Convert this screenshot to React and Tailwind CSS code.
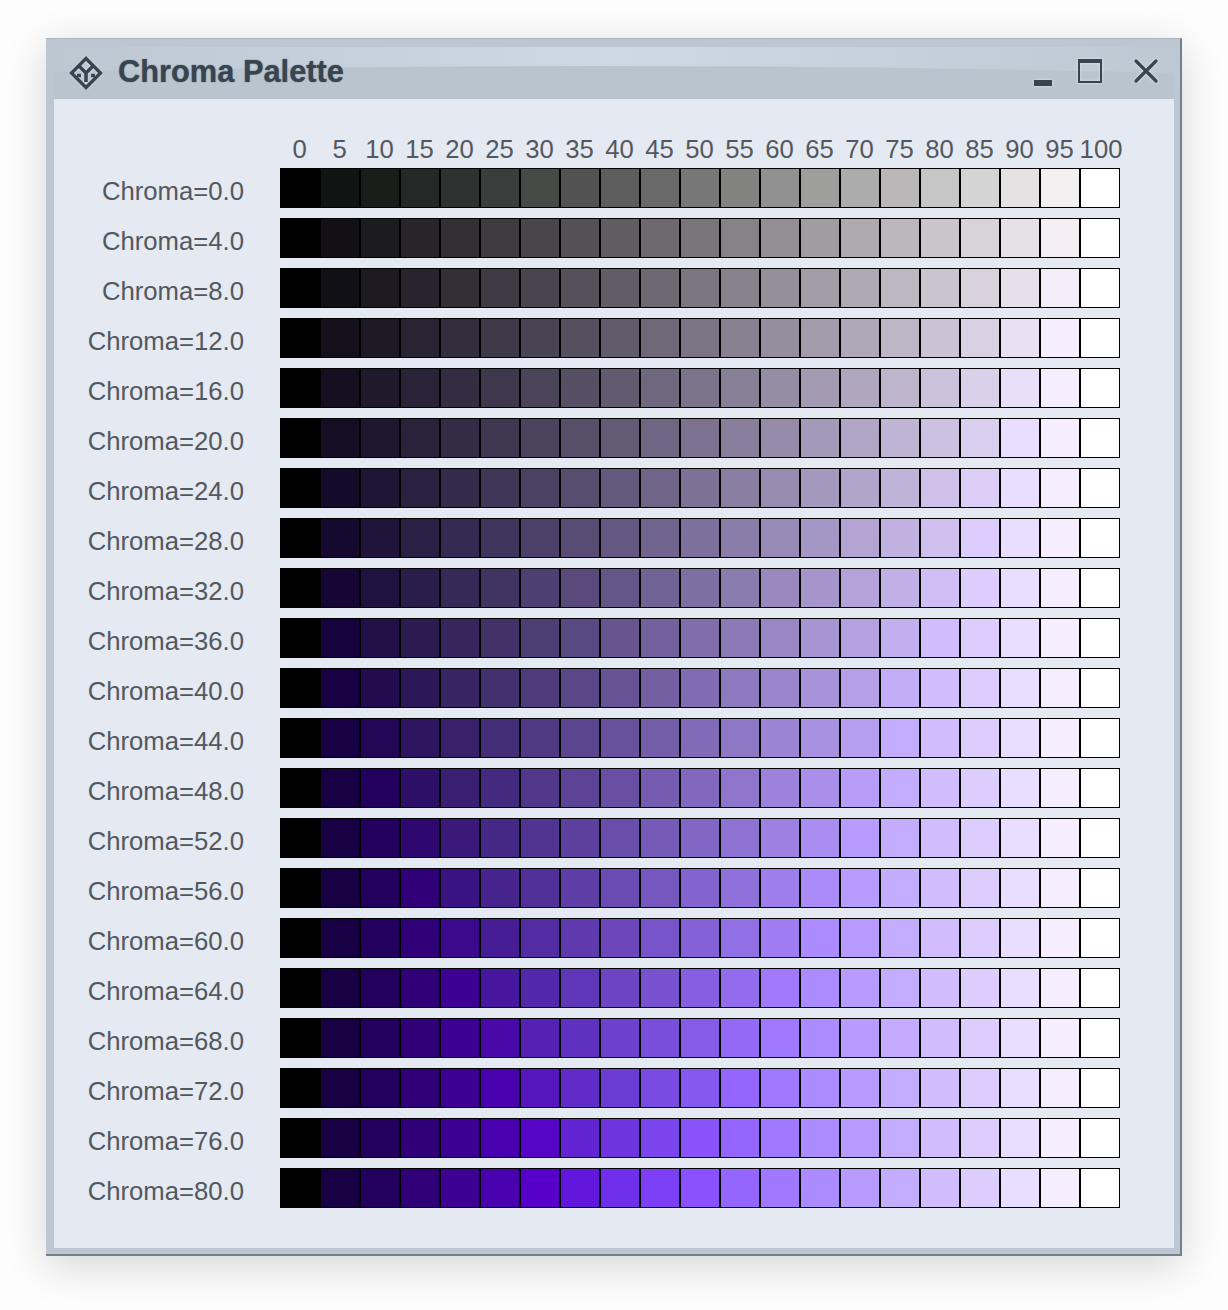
import React from "react";

const HUE = 300;
const yFromL = (L) => (L > 8 ? Math.pow((L + 16) / 116, 3) * 100 : (L / 903.3) * 100);
const W = [95.047, 100, 108.883];
const rW = 0.401288 * W[0] + 0.650173 * W[1] - 0.051461 * W[2];
const gW = -0.250268 * W[0] + 1.204414 * W[1] + 0.045854 * W[2];
const bW = -0.002079 * W[0] + 0.048952 * W[1] + 0.953127 * W[2];
const la = (200 / Math.PI) * yFromL(50) / 100;
const f = 1, cc = 0.69, nc = 1;
const d = Math.min(1, Math.max(0, f * (1 - (1 / 3.6) * Math.exp((-la - 42) / 92))));
const rgbD = [d * (100 / rW) + 1 - d, d * (100 / gW) + 1 - d, d * (100 / bW) + 1 - d];
const k = 1 / (5 * la + 1);
const k4 = k * k * k * k;
const fl = k4 * la + 0.1 * (1 - k4) * (1 - k4) * Math.cbrt(5 * la);
const n = yFromL(50) / 100;
const z = 1.48 + Math.sqrt(n);
const nbb = 0.725 / Math.pow(n, 0.2);
const af = [rW, gW, bW].map((v, i) => {
  const t = Math.pow((fl * rgbD[i] * v) / 100, 0.42);
  return (400 * t) / (t + 27.13);
});
const aw = (2 * af[0] + af[1] + 0.05 * af[2]) * nbb;

function camToLinear(J, C, hDeg) {
  const alpha = J <= 0 ? 0 : C / Math.sqrt(J / 100);
  const t = Math.pow(alpha / Math.pow(1.64 - Math.pow(0.29, n), 0.73), 1 / 0.9);
  const h = (hDeg * Math.PI) / 180;
  const e = 0.25 * (Math.cos(h + 2) + 3.8);
  const ac = aw * Math.pow(Math.max(J, 0) / 100, 1 / cc / z);
  const p1 = e * (50000 / 13) * nc * nbb;
  const p2 = ac / nbb;
  const hs = Math.sin(h), hc = Math.cos(h);
  const g = (23 * (p2 + 0.305) * t) / (23 * p1 + 11 * t * hc + 108 * t * hs);
  const a = g * hc, b = g * hs;
  const rA = (460 * p2 + 451 * a + 288 * b) / 1403;
  const gA = (460 * p2 - 891 * a - 261 * b) / 1403;
  const bA = (460 * p2 - 220 * a - 6300 * b) / 1403;
  const inv = (v) => Math.sign(v) * (100 / fl) * Math.pow(Math.max(0, (27.13 * Math.abs(v)) / (400 - Math.abs(v))), 1 / 0.42);
  const rF = inv(rA) / rgbD[0], gF = inv(gA) / rgbD[1], bF = inv(bA) / rgbD[2];
  const x = 1.86206786 * rF - 1.01125463 * gF + 0.14918677 * bF;
  const y = 0.38752654 * rF + 0.62144744 * gF - 0.00897398 * bF;
  const zz = -0.0158415 * rF - 0.03412294 * gF + 1.04996444 * bF;
  return {
    y,
    rgb: [
      (3.2406 * x - 1.5372 * y - 0.4986 * zz) / 100,
      (-0.9689 * x + 1.8758 * y + 0.0415 * zz) / 100,
      (0.0557 * x - 0.204 * y + 1.057 * zz) / 100,
    ],
  };
}

function solveJ(C, hue, target) {
  let lo = 0, hi = 100;
  for (let i = 0; i < 22; i++) {
    const m = (lo + hi) / 2;
    if (camToLinear(m, C, hue).y < target) lo = m;
    else hi = m;
  }
  return camToLinear((lo + hi) / 2, C, hue).rgb;
}

const enc = (v) => {
  const c = Math.max(0, Math.min(1, v));
  const s = c <= 0.0031308 ? 12.92 * c : 1.055 * Math.pow(c, 1 / 2.4) - 0.055;
  return Math.round(s * 255);
};
const inGamut = (rgb) => rgb.every((v) => v >= -0.0005 && v <= 1.0005);

function hct(hue, C, T) {
  if (T <= 0) return "rgb(0,0,0)";
  if (T >= 100) return "rgb(255,255,255)";
  const target = yFromL(T);
  let rgb = solveJ(C, hue, target);
  if (!inGamut(rgb)) {
    let lo = 0, hi = C;
    rgb = solveJ(0, hue, target);
    for (let i = 0; i < 10; i++) {
      const m = (lo + hi) / 2;
      const r = solveJ(m, hue, target);
      if (inGamut(r)) { lo = m; rgb = r; } else hi = m;
    }
  }
  return `rgb(${enc(rgb[0])},${enc(rgb[1])},${enc(rgb[2])})`;
}

const GREYS = ["#000000","#111412","#1b1d1b","#252826","#303231","#3b3d3c","#474947","#525252","#5d5d5d","#696969","#777777","#828281","#919191","#9e9e9c","#ababab","#b9b7b7","#c6c6c6","#d4d4d4","#e4e2e2","#f2f0f0","#ffffff"];
const tones = Array.from({ length: 21 }, (_, i) => i * 5);
const chromas = Array.from({ length: 21 }, (_, i) => i * 4);
const colors = chromas.map((c, r) => tones.map((t, i) => (r === 0 ? GREYS[i] : hct(HUE, c, t))));

function Gloss() {
  return (
    <svg className="absolute left-0 top-0" width="1134" height="60" viewBox="0 0 1134 60">
      <defs>
        <linearGradient id="g" x1="0" x2="1" y1="0" y2="0">
          <stop offset="0" stopColor="#bcc7d2" />
          <stop offset="0.5" stopColor="#cfd9e6" />
          <stop offset="1" stopColor="#bdc8d3" />
        </linearGradient>
      </defs>
      <rect x="0" y="8" width="1134" height="30" fill="url(#g)" />
      <path d="M8 33 Q567 20.5 1128 34 V60 H8 Z" fill="#b9c4cf" />
    </svg>
  );
}

export default function App() {
  return (
    <div className="h-[1310px] bg-[#fdfdfd] pl-[46px] pt-[38px] font-['Liberation_Sans',Arial,sans-serif]">
      <div className="flex h-[1218px] w-[1136px] flex-col border-r-2 border-b-2 border-t border-t-[#adb6bf] border-r-[#75808c] border-b-[#75808c] bg-[#bcc7d2] shadow-[0_10px_40px_rgba(0,0,0,0.16)]">
        <div className="relative h-[59px] shrink-0">
          <Gloss />
          <div className="relative flex h-full items-center pl-[23px] pt-[8px] text-[#38444f]">
            <svg width="34" height="34" viewBox="0 0 34 34" fill="none" stroke="#38444f" strokeWidth="3.4" className="[filter:drop-shadow(0_0_1px_#dde3ea)]">
              <path d="M17 2.5 L31.5 17 L17 31.5 L2.5 17 Z" strokeLinejoin="miter" />
              <path d="M10 10 L17 17 L24 10" />
              <path d="M17 17 V26" strokeWidth="3.6" />
              <path d="M8 19.5 L12 19.5 M22 19.5 L26 19.5" />
            </svg>
            <div className="ml-[15px] text-[30.8px] font-bold leading-none [text-shadow:0_0_1px_#6f7a85,0_0_2px_#8b96a1,0_0_3px_#d5dce3]">Chroma Palette</div>
            <div className="ml-auto flex items-center pr-[21px]">
              <svg width="18" height="6" viewBox="0 0 18 6" className="mt-[20px] [filter:drop-shadow(0_0_1.5px_#e3e9f0)]">
                <rect width="18" height="6" fill="#38444f" />
              </svg>
              <svg width="24" height="24" viewBox="0 0 24 24" fill="none" className="ml-[26px] mt-[-4px] [filter:drop-shadow(0_0_1.5px_#e3e9f0)]">
                <path d="M1 3 V23 H23 V3" stroke="#38444f" strokeWidth="2" />
                <rect width="24" height="4" fill="#38444f" />
              </svg>
              <svg width="26" height="26" viewBox="0 0 26 26" fill="none" className="ml-[31px] mt-[-3px] [filter:drop-shadow(0_0_1.5px_#e3e9f0)]">
                <path d="M3 3 L23 23 M23 3 L3 23" stroke="#38444f" strokeWidth="3.2" strokeLinecap="round" />
              </svg>
            </div>
          </div>
        </div>
        <div className="ml-[8px] mr-[6px] h-[1150px] bg-[#e4e9f2] text-[25.7px] text-[#53585f]">
          <div className="flex h-[70px] items-end pb-[4px] pl-[225.6px]">
            {tones.map((t) => (
              <div key={t} className="w-10 text-center leading-[30px]">{t}</div>
            ))}
          </div>
          <div className="flex flex-col gap-[10px]">
            {chromas.map((c, r) => (
              <div key={c} className="flex h-10">
                <div className="w-[190px] pt-[3px] text-right leading-[40px]">Chroma={c.toFixed(1)}</div>
                <div className="ml-[36px] flex">
                  {colors[r].map((bg, i) => (
                    <div key={i} className="h-10 w-10 border border-black" style={{ backgroundColor: bg }} />
                  ))}
                </div>
              </div>
            ))}
          </div>
        </div>
      </div>
    </div>
  );
}
